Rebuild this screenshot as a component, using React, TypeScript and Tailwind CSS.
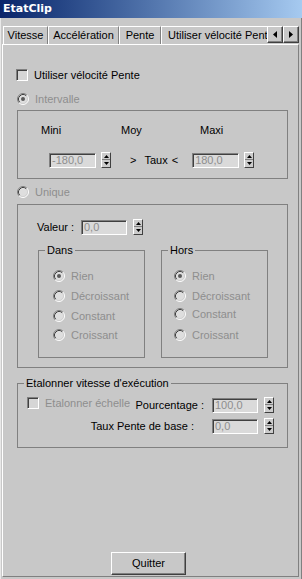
import React from "react";

const sunken =
  "border border-t-[#808080] border-l-[#808080] border-b-white border-r-white shadow-[inset_1px_1px_0_#404040]";
const raised =
  "border border-t-white border-l-white border-r-[#404040] border-b-[#404040] shadow-[inset_-1px_-1px_0_#808080]";

function Radio({ checked }: { checked?: boolean }) {
  return (
    <svg width="12" height="12" viewBox="0 0 12 12" className="shrink-0">
      <circle cx="6" cy="6" r="5" fill="#dedede" />
      <path d="M2.11 9.89 A5.5 5.5 0 0 1 9.89 2.11" fill="none" stroke="#808080" strokeWidth="1" />
      <path d="M9.89 2.11 A5.5 5.5 0 0 1 2.11 9.89" fill="none" stroke="#ffffff" strokeWidth="1" />
      <path d="M2.82 9.18 A4.5 4.5 0 0 1 9.18 2.82" fill="none" stroke="#404040" strokeWidth="1" />
      <path d="M9.18 2.82 A4.5 4.5 0 0 1 2.82 9.18" fill="none" stroke="#d0d0d0" strokeWidth="1" />
      {checked && <circle cx="6" cy="6" r="2" fill="#5a5a5a" />}
    </svg>
  );
}

function Check() {
  return <div className={"w-[12px] h-[12px] shrink-0 bg-[#d6d6d6] " + sunken} />;
}

function Edit({ value, className }: { value: string; className: string }) {
  return (
    <div
      className={
        "h-[15px] shrink-0 bg-[#dadada] text-[#8e8e8e] leading-[12px] pl-[2px] overflow-hidden whitespace-nowrap " +
        sunken +
        " " +
        className
      }
    >
      {value}
    </div>
  );
}

function Spinner() {
  return (
    <div className="w-[10px] h-[16px] shrink-0 flex flex-col bg-[#cccccc] border border-t-white border-l-white border-r-[#404040] border-b-[#404040]">
      <div className="h-[7px] flex items-center justify-center border-b border-b-[#808080]">
        <svg width="5" height="3" viewBox="0 0 5 3">
          <path d="M2.5 0 L5 3 L0 3 Z" fill="#000" />
        </svg>
      </div>
      <div className="flex-1 flex items-center justify-center">
        <svg width="5" height="3" viewBox="0 0 5 3">
          <path d="M0 0 L5 0 L2.5 3 Z" fill="#000" />
        </svg>
      </div>
    </div>
  );
}

function RadioRow({
  label,
  checked,
  className,
}: {
  label: string;
  checked?: boolean;
  className: string;
}) {
  return (
    <div className={"flex items-center h-[12px] " + className}>
      <Radio checked={checked} />
      <span className="ml-[6px] leading-[13px] text-[#8e8e8e] whitespace-nowrap">{label}</span>
    </div>
  );
}

export default function App() {
  return (
    <div className="w-[302px] h-[579px] bg-[#c8c8c8] flex flex-col overflow-hidden font-['Liberation_Sans',Arial,sans-serif] text-[11px] text-black">
      {/* Title bar */}
      <div className="h-[18px] shrink-0 bg-gradient-to-r from-[#0a246a] to-[#a6caf0] text-white font-bold font-['DejaVu_Sans',sans-serif] text-[11px] leading-[18px] pl-[3px]">
        EtatClip
      </div>

      {/* Body */}
      <div className="flex-1 flex flex-col border-l border-l-[#e8e8e8] border-r border-r-[#808080] pl-[1px] pr-[2px] pb-[2px]">
        {/* Tabs */}
        <div className="mt-[8px] h-[18px] ml-[1px] flex shrink-0 overflow-hidden">
          <div className="w-[45px] shrink-0 flex items-center justify-center pb-[1px] border-t border-l border-t-white border-l-white border-r border-r-[#808080]">
            Vitesse
          </div>
          <div className="w-[71px] shrink-0 flex items-center justify-center pb-[1px] border-t border-l border-t-white border-l-white border-r border-r-[#808080]">
            Accélération
          </div>
          <div className="w-[42px] shrink-0 flex items-center justify-center pb-[1px] border-t border-l border-t-white border-l-white border-r border-r-[#808080]">
            Pente
          </div>
          <div className="flex-1 min-w-0 flex items-center pl-[6px] pb-[1px] whitespace-nowrap overflow-hidden border-t border-l border-t-white border-l-white">
            Utiliser vélocité Pente
          </div>
          <div className={"w-[16px] h-[17px] shrink-0 flex items-center justify-center bg-[#c8c8c8] " + raised}>
            <svg width="4" height="7" viewBox="0 0 4 7">
              <path d="M4 0 L4 7 L0 3.5 Z" fill="#000" />
            </svg>
          </div>
          <div className={"w-[16px] h-[17px] shrink-0 flex items-center justify-center bg-[#c8c8c8] " + raised}>
            <svg width="4" height="7" viewBox="0 0 4 7">
              <path d="M0 0 L4 3.5 L0 7 Z" fill="#000" />
            </svg>
          </div>
        </div>

        {/* Panel */}
        <div className="flex-1 flex flex-col border border-t-white border-l-white border-r-[#808080] border-b-[#808080]">
          {/* Utiliser vélocité Pente */}
          <div className="mt-[24px] pl-[13px] h-[12px] flex items-center">
            <Check />
            <span className="ml-[6px] leading-[13px]">Utiliser vélocité Pente</span>
          </div>

          <RadioRow label="Intervalle" checked className="mt-[12px] pl-[14px]" />

          {/* Group 1 */}
          <div className="mt-[5px] ml-[14px] w-[271px] h-[69px] shrink-0 border border-[#808080] flex flex-col">
            <div className="mt-[13px] h-[13px] leading-[13px] flex pl-[23px]">
              <span className="w-[80px]">Mini</span>
              <span className="w-[79px]">Moy</span>
              <span>Maxi</span>
            </div>
            <div className="mt-[15px] h-[16px] flex items-center pl-[31px]">
              <Edit value="-180,0" className="w-[47px]" />
              <span className="ml-[5px]">
                <Spinner />
              </span>
              <span className="ml-[19px] leading-[13px]">&gt;</span>
              <span className="ml-[8px] leading-[13px]">Taux</span>
              <span className="ml-[4px] leading-[13px]">&lt;</span>
              <span className="ml-[14px]">
                <Edit value="180,0" className="w-[47px]" />
              </span>
              <span className="ml-[5px]">
                <Spinner />
              </span>
            </div>
          </div>

          <RadioRow label="Unique" className="mt-[7px] pl-[14px]" />

          {/* Group 2 */}
          <div className="mt-[6px] ml-[14px] w-[271px] h-[164px] shrink-0 border border-[#808080] flex flex-col">
            <div className="mt-[14px] h-[16px] flex items-center pl-[19px]">
              <span className="w-[44px] leading-[13px]">Valeur :</span>
              <Edit value="0,0" className="w-[46px]" />
              <span className="ml-[6px]">
                <Spinner />
              </span>
            </div>
            <div className="mt-[9px] flex pl-[20px] gap-[16px]">
              <fieldset className="w-[107px] h-[114px] border border-[#808080]">
                <legend className="ml-[6px] px-[2px] leading-[13px]">Dans</legend>
                <RadioRow label="Rien" checked className="mt-[13px] pl-[14px]" />
                <RadioRow label="Décroissant" className="mt-[8px] pl-[14px]" />
                <RadioRow label="Constant" className="mt-[8px] pl-[14px]" />
                <RadioRow label="Croissant" className="mt-[7px] pl-[14px]" />
              </fieldset>
              <fieldset className="w-[107px] h-[114px] border border-[#808080]">
                <legend className="ml-[6px] px-[2px] leading-[13px]">Hors</legend>
                <RadioRow label="Rien" checked className="mt-[13px] pl-[12px]" />
                <RadioRow label="Décroissant" className="mt-[8px] pl-[12px]" />
                <RadioRow label="Constant" className="mt-[6px] pl-[12px]" />
                <RadioRow label="Croissant" className="mt-[9px] pl-[12px]" />
              </fieldset>
            </div>
          </div>

          {/* Group 3 */}
          <fieldset className="mt-[9px] ml-[14px] w-[271px] h-[71px] shrink-0 border border-[#808080]">
            <legend className="ml-[6px] px-[2px] leading-[13px]">Etalonner vitesse d'exécution</legend>
            <div className="mt-[7px] h-[16px] flex items-center">
              <div className="w-[194px] h-[16px] flex">
                <div className="ml-[9px] self-start">
                  <Check />
                </div>
                <span className="ml-[6px] self-start leading-[13px] text-[#8e8e8e]">Etalonner échelle</span>
                <span className="ml-auto mr-[8px] self-center leading-[13px]">Pourcentage :</span>
              </div>
              <Edit value="100,0" className="w-[46px]" />
              <span className="ml-[6px]">
                <Spinner />
              </span>
            </div>
            <div className="mt-[5px] h-[16px] flex items-center">
              <div className="w-[194px] text-right pr-[18px] leading-[13px]">Taux Pente de base :</div>
              <Edit value="0,0" className="w-[46px]" />
              <span className="ml-[6px]">
                <Spinner />
              </span>
            </div>
          </fieldset>

          {/* Button */}
          <div className="mt-auto mb-[1px] pl-[108px]">
            <button className={"w-[75px] h-[23px] bg-[#c8c8c8] leading-[13px] " + raised}>Quitter</button>
          </div>
        </div>
      </div>
    </div>
  );
}
